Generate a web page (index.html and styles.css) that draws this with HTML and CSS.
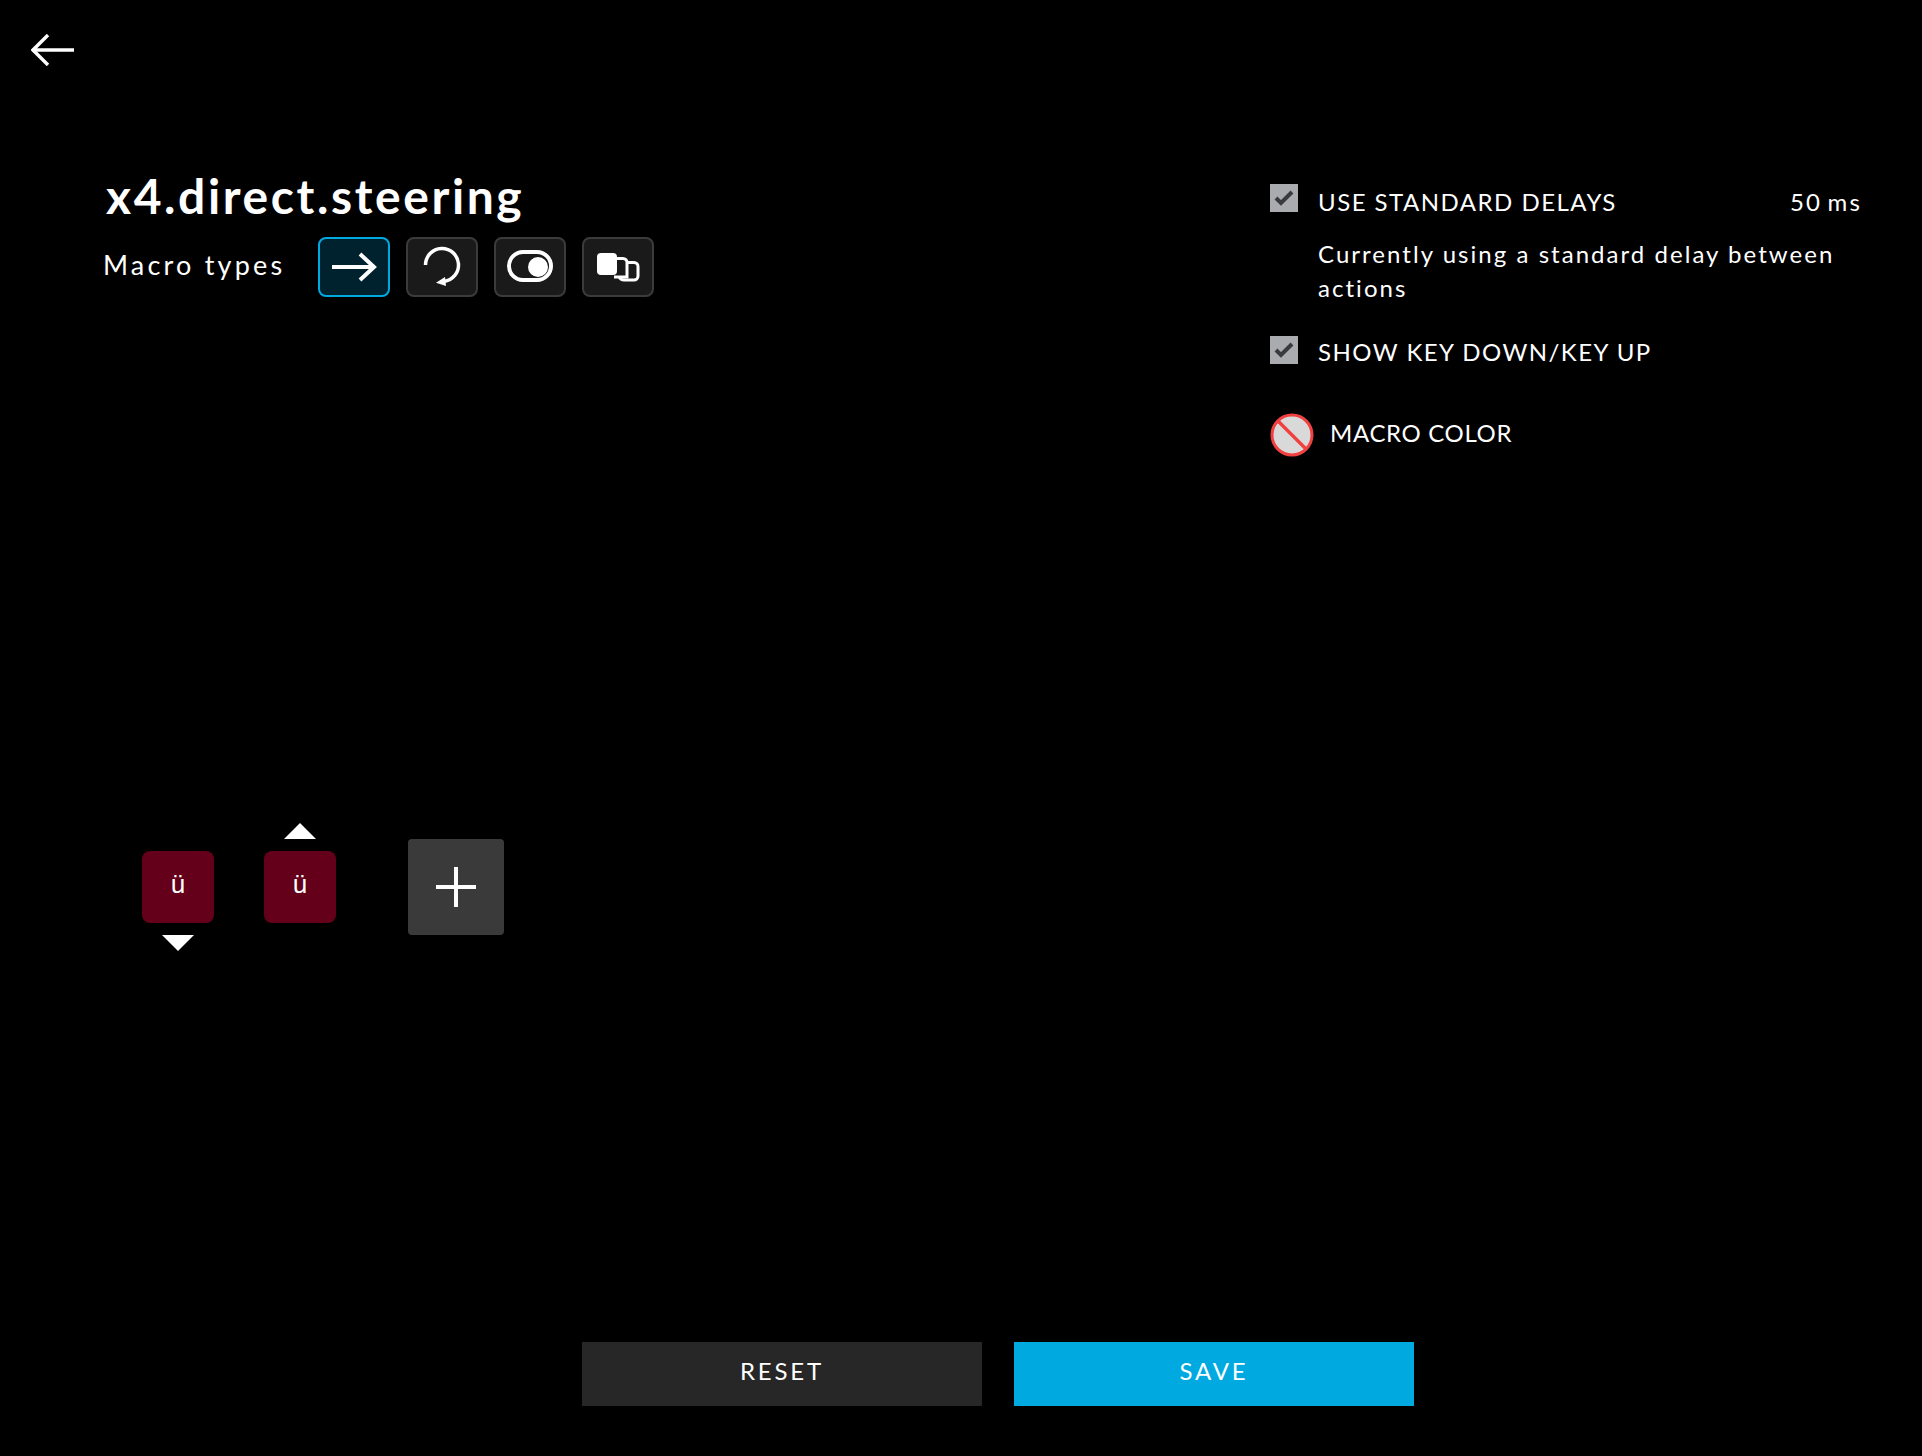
FILE: index.html
```html
<!DOCTYPE html>
<html lang="en">
<head>
<meta charset="utf-8">
<title>Macro editor</title>
<link rel="stylesheet" href="styles.css">
</head>
<body>
<div class="page">
  <header class="top">
    <svg class="back" width="43" height="32" viewBox="0 0 43 32" fill="none" stroke="#fff" stroke-width="3.4"><path d="M1.5 16H43"/><path d="M17 1L2 16l15 15"/></svg>
  </header>
  <main class="main">
    <section class="left">
      <h1 class="title">x4.direct.steering</h1>
      <div class="types">
        <span class="types-label">Macro types</span>
        <div class="type-btn active">
          <svg width="68" height="56" viewBox="0 0 68 56" fill="none" stroke="#fff" stroke-width="4"><path d="M12 28H54"/><path d="M40 15l14 13-14 13"/></svg>
        </div>
        <div class="type-btn">
          <svg width="68" height="56" viewBox="0 0 68 56" fill="none" stroke="#fff" stroke-width="3.5"><path d="M17.5 26A16.5 16.5 0 1 1 36 42.4"/><path d="M28 43.7l9-5.7 1 9z" fill="#fff" stroke="none"/></svg>
        </div>
        <div class="type-btn">
          <svg width="68" height="56" viewBox="0 0 68 56" fill="none"><rect x="13" y="13" width="42" height="28" rx="14" stroke="#fff" stroke-width="4"/><circle cx="42" cy="28" r="10" fill="#fff"/></svg>
        </div>
        <div class="type-btn">
          <svg width="68" height="56" viewBox="0 0 68 56" fill="none" stroke="#fff" stroke-width="3"><path d="M44 23.5H50a4 4 0 0 1 4 4V37a4 4 0 0 1-4 4H40a6 6 0 0 1-5-3"/><path d="M30 19.5H39a4 4 0 0 1 4 4V38H30"/><rect x="13" y="14" width="20" height="22" rx="4" fill="#fff" stroke="none"/></svg>
        </div>
      </div>
    </section>
    <aside class="side">
      <div class="option">
        <span class="check"><svg width="20" height="16" viewBox="0 0 20 16" fill="none" stroke="#3a3a3c" stroke-width="4"><path d="M2 8l5 5L18 2"/></svg></span>
        <div class="option-body">
          <div class="option-head"><span class="option-label">USE STANDARD DELAYS</span><span class="delay">50 ms</span></div>
          <p class="desc">Currently using a standard delay between actions</p>
        </div>
      </div>
      <div class="option second">
        <span class="check"><svg width="20" height="16" viewBox="0 0 20 16" fill="none" stroke="#3a3a3c" stroke-width="4"><path d="M2 8l5 5L18 2"/></svg></span>
        <div class="option-body">
          <span class="option-label">SHOW KEY DOWN/KEY UP</span>
        </div>
      </div>
      <div class="color-row">
        <svg width="44" height="44" viewBox="0 0 44 44"><circle cx="22" cy="22" r="20" fill="#d9d9d9" stroke="#f04040" stroke-width="3"/><path d="M8 8l28 28" stroke="#f04040" stroke-width="3.4"/></svg>
        <span class="color-label">MACRO COLOR</span>
      </div>
    </aside>
  </main>
  <section class="sequence">
    <div class="step">
      <span class="tri hidden"></span>
      <div class="key">ü</div>
      <span class="tri down"></span>
    </div>
    <div class="step">
      <span class="tri up"></span>
      <div class="key">ü</div>
      <span class="tri hidden"></span>
    </div>
    <div class="add"><span class="plus"></span></div>
  </section>
  <footer class="actions">
    <div class="btn reset">RESET</div>
    <div class="btn save">SAVE</div>
  </footer>
</div>
</body>
</html>
```
FILE: styles.css
```css
* { box-sizing: border-box; }
html, body { margin: 0; background: #000; }
body { font-family: "Lato", "Liberation Sans", sans-serif; color: #fff; }
.page { width: 1922px; height: 1456px; display: flex; flex-direction: column; overflow: hidden; }

.top { height: 166px; padding: 34px 0 0 31px; flex: none; }
.back { display: block; }

.main { display: flex; justify-content: space-between; height: 656px; flex: none; }
.left { padding-left: 106px; }
.title { margin: 0; font-size: 48px; line-height: 60px; font-weight: 700; letter-spacing: 2.6px; height: 71px; white-space: nowrap; }
.types { display: flex; align-items: center; gap: 16px; }
.types-label { font-size: 27px; letter-spacing: 3.2px; width: 199px; margin-left: -3px; margin-top: -6px; white-space: nowrap; }
.type-btn { width: 72px; height: 60px; border: 2px solid #3b3b3b; border-radius: 8px; background: #1a1a1a; flex: none; }
.type-btn.active { border-color: #00a9e0; background: #00222e; }
.type-btn svg { display: block; }

.side { width: 592px; padding: 18px 0 0 0; margin-right: 60px; }
.option { display: flex; gap: 20px; }
.option.second { margin-top: 31px; }
.check { width: 28px; height: 28px; background: #a9abae; flex: none; display: flex; align-items: center; justify-content: center; }
.option-body { flex: 1; padding-top: 3px; }
.second .option-body { padding-top: 1px; }
.option-head { display: flex; justify-content: space-between; }
.option-label { font-size: 24px; line-height: 30px; letter-spacing: 1.48px; white-space: nowrap; }
.delay { font-size: 24px; line-height: 30px; letter-spacing: 2.2px; word-spacing: -3px; }
.desc { margin: 20px 0 0; font-size: 24px; line-height: 34px; letter-spacing: 2.04px; width: 530px; }
.color-row { display: flex; align-items: center; gap: 16px; margin-top: 46px; }
.color-label { font-size: 24px; line-height: 30px; letter-spacing: 0.65px; white-space: nowrap; padding-bottom: 5px; }

.sequence { display: flex; align-items: center; padding-left: 142px; height: 128px; margin-top: 1px; flex: none; }
.step { width: 72px; margin-right: 50px; display: flex; flex-direction: column; align-items: center; }
.step + .step { margin-right: 72px; }
.key { width: 72px; height: 72px; border-radius: 8px; background: #640019; font-family: "Liberation Sans", sans-serif; font-size: 26px; display: flex; align-items: center; justify-content: center; padding-bottom: 6px; margin: 12px 0; }
.tri { width: 0; height: 0; border-left: 16px solid transparent; border-right: 16px solid transparent; }
.tri.up { border-bottom: 16px solid #fff; }
.tri.down { border-top: 16px solid #fff; }
.tri.hidden { border-top: 16px solid transparent; }
.add { width: 96px; height: 96px; background: #3a3a3a; border-radius: 4px; display: flex; align-items: center; justify-content: center; }
.plus { width: 40px; height: 40px; background: linear-gradient(#fff, #fff) center / 100% 4px no-repeat, linear-gradient(#fff, #fff) center / 4px 100% no-repeat; }

.actions { display: flex; gap: 32px; padding-left: 582px; margin-top: 391px; flex: none; }
.btn { width: 400px; height: 64px; display: flex; align-items: center; justify-content: center; font-size: 24px; letter-spacing: 2.8px; padding-bottom: 8px; }
.reset { background: #272727; }
.save { background: #00a9e0; }
```
